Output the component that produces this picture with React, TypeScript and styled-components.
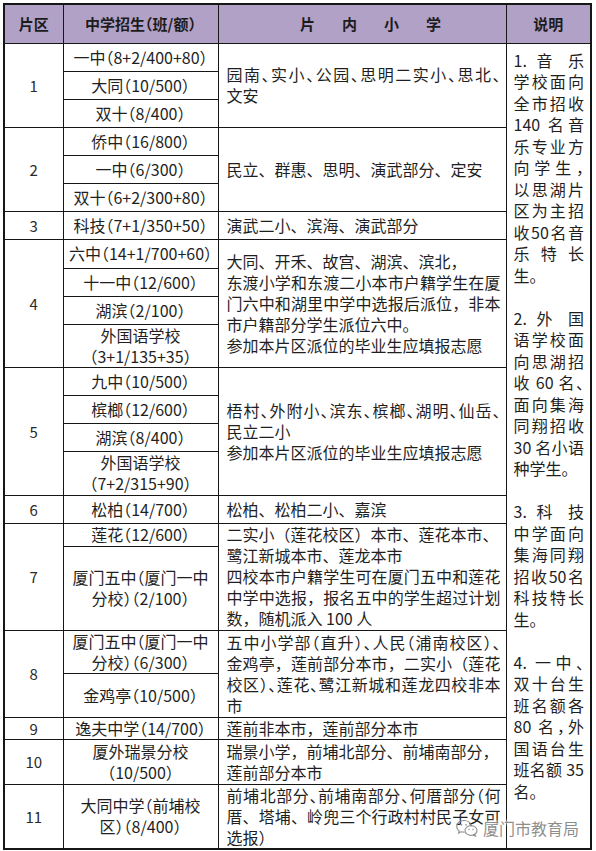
import React from "react";
import styled, { createGlobalStyle } from "styled-components";

const Global = createGlobalStyle`
  html, body {
    margin: 0;
    padding: 0;
    background: #ffffff;
  }
  body {
    font-family: "Noto Sans CJK SC", "Noto Sans", sans-serif;
    color: #1f1f1f;
  }
`;

const Page = styled.div`
  padding: 3px 0 0 3px;
`;

const Frame = styled.div`
  position: relative;
  width: 587px;
`;

const Table = styled.table`
  width: 587px;
  border-collapse: collapse;
  table-layout: fixed;
  border: 2px solid #161616;
`;

const Col = styled.col<{ $w: number }>`
  width: ${(p) => p.$w}px;
`;

const Row = styled.tr<{ $h: number }>`
  height: ${(p) => p.$h}px;
`;

const HeadCell = styled.th<{ $spread?: boolean }>`
  background: #b2a1c7;
  border: 1px solid #161616;
  font-size: 15px;
  font-weight: 700;
  color: #1c1c1c;
  text-align: center;
  vertical-align: middle;
  padding: 0;
  padding-left: ${(p) => (p.$spread ? "44px" : "0")};
  letter-spacing: ${(p) => (p.$spread ? "27px" : "0")};
  white-space: nowrap;
  font-feature-settings: "halt";
`;

const Cell = styled.td`
  border: 1px solid #161616;
  vertical-align: middle;
  padding: 0;
  font-size: 16px;
  line-height: 21px;
  color: #1f1f1f;
`;

const ZoneCell = styled(Cell)`
  text-align: center;
  font-size: 15px;
  color: #2a2a2a;
`;

const SchoolCell = styled(Cell)`
  text-align: center;
  white-space: nowrap;
  font-feature-settings: "halt";
`;

const AreaCell = styled(Cell)`
  padding: 0 5px 0 8px;
`;

const AreaLine = styled.span<{ $full?: boolean; $squeeze?: boolean }>`
  display: block;
  text-align: ${(p) => (p.$full ? "justify" : "left")};
  text-align-last: ${(p) => (p.$full ? "justify" : "left")};
  font-feature-settings: ${(p) => (p.$squeeze ? '"halt"' : "normal")};
`;

const NoteCell = styled(Cell)`
  vertical-align: top;
  padding: 6px 6px 0 7px;
  line-height: 21.5px;
`;

const NotePara = styled.div`
  margin-bottom: 21.5px;
  &:last-child {
    margin-bottom: 0;
  }
`;

const NoteLine = styled.span<{ $last?: boolean }>`
  display: block;
  font-feature-settings: "halt";
  text-align: ${(p) => (p.$last ? "left" : "justify")};
  text-align-last: ${(p) => (p.$last ? "left" : "justify")};
`;

const Watermark = styled.div`
  position: absolute;
  right: 11px;
  bottom: 12px;
  display: flex;
  align-items: center;
  gap: 4px;
  color: rgba(120, 120, 120, 0.85);
  font-size: 16px;
  line-height: 20px;
  text-shadow: 0 0 2px #fff, 0 0 3px #fff, 0 0 4px #fff;
  pointer-events: none;
`;

type Line = { t: string; full?: boolean; squeeze?: boolean };
type Zone = {
  zone: string;
  schools: { lines: string[]; h: number }[];
  area: Line[];
};

const zones: Zone[] = [
  {
    zone: "1",
    schools: [
      { lines: ["一中（8+2/400+80）"], h: 28 },
      { lines: ["大同（10/500）"], h: 28 },
      { lines: ["双十（8/400）"], h: 28 },
    ],
    area: [
      { t: "园南、实小、公园、思明二实小、思北、", full: true, squeeze: true },
      { t: "文安" },
    ],
  },
  {
    zone: "2",
    schools: [
      { lines: ["侨中（16/800）"], h: 28 },
      { lines: ["一中（6/300）"], h: 28 },
      { lines: ["双十（6+2/300+80）"], h: 28 },
    ],
    area: [{ t: "民立、群惠、思明、演武部分、定安" }],
  },
  {
    zone: "3",
    schools: [{ lines: ["科技（7+1/350+50）"], h: 28 }],
    area: [{ t: "演武二小、滨海、演武部分" }],
  },
  {
    zone: "4",
    schools: [
      { lines: ["六中（14+1/700+60）"], h: 29 },
      { lines: ["十一中（12/600）"], h: 28 },
      { lines: ["湖滨（2/100）"], h: 28 },
      { lines: ["外国语学校", "（3+1/135+35）"], h: 43 },
    ],
    area: [
      { t: "大同、开禾、故宫、湖滨、滨北，" },
      { t: "东渡小学和东渡二小本市户籍学生在厦", full: true },
      { t: "门六中和湖里中学中选报后派位，非本", full: true },
      { t: "市户籍部分学生派位六中。" },
      { t: "参加本片区派位的毕业生应填报志愿" },
    ],
  },
  {
    zone: "5",
    schools: [
      { lines: ["九中（10/500）"], h: 28 },
      { lines: ["槟榔（12/600）"], h: 28 },
      { lines: ["湖滨（8/400）"], h: 28 },
      { lines: ["外国语学校", "（7+2/315+90）"], h: 44 },
    ],
    area: [
      { t: "梧村、外附小、滨东、槟榔、湖明、仙岳、", full: true, squeeze: true },
      { t: "民立二小" },
      { t: "参加本片区派位的毕业生应填报志愿" },
    ],
  },
  {
    zone: "6",
    schools: [{ lines: ["松柏（14/700）"], h: 28 }],
    area: [{ t: "松柏、松柏二小、嘉滨" }],
  },
  {
    zone: "7",
    schools: [
      { lines: ["莲花（12/600）"], h: 23 },
      { lines: ["厦门五中（厦门一中", "分校）（2/100）"], h: 84 },
    ],
    area: [
      { t: "二实小（莲花校区）本市、莲花本市、" },
      { t: "鹭江新城本市、莲龙本市" },
      { t: "四校本市户籍学生可在厦门五中和莲花", full: true },
      { t: "中学中选报，报名五中的学生超过计划", full: true },
      { t: "数，随机派入 100 人" },
    ],
  },
  {
    zone: "8",
    schools: [
      { lines: ["厦门五中（厦门一中", "分校）（6/300）"], h: 43 },
      { lines: ["金鸡亭（10/500）"], h: 44 },
    ],
    area: [
      { t: "五中小学部（直升）、人民（浦南校区）、", full: true, squeeze: true },
      { t: "金鸡亭，莲前部分本市，二实小（莲花", full: true },
      { t: "校区）、莲花、鹭江新城和莲龙四校非本", full: true, squeeze: true },
      { t: "市" },
    ],
  },
  {
    zone: "9",
    schools: [{ lines: ["逸夫中学（14/700）"], h: 20 }],
    area: [{ t: "莲前非本市，莲前部分本市" }],
  },
  {
    zone: "10",
    schools: [{ lines: ["厦外瑞景分校", "（10/500）"], h: 45 }],
    area: [
      { t: "瑞景小学，前埔北部分、前埔南部分，" },
      { t: "莲前部分本市" },
    ],
  },
  {
    zone: "11",
    schools: [{ lines: ["大同中学（前埔校", "区）（8/400）"], h: 63 }],
    area: [
      { t: "前埔北部分、前埔南部分、何厝部分（何", full: true, squeeze: true },
      { t: "厝、塔埔、岭兜三个行政村村民子女可", full: true },
      { t: "选报）" },
    ],
  },
];

const notes: string[][] = [
  [
    "1. 音 乐",
    "学校面向",
    "全市招收",
    "140 名音",
    "乐专业方",
    "向学生，",
    "以思湖片",
    "区为主招",
    "收50名音",
    "乐 特 长",
    "生。",
  ],
  [
    "2. 外 国",
    "语学校面",
    "向思湖招",
    "收 60 名、",
    "面向集海",
    "同翔招收",
    "30 名小语",
    "种学生。",
  ],
  ["3. 科 技", "中学面向", "集海同翔", "招收50名", "科技特长", "生。"],
  [
    "4. 一中、",
    "双十台生",
    "班名额各",
    "80 名，外",
    "国语台生",
    "班名额 35",
    "名。",
  ],
];

const totalRows = zones.reduce((n, z) => n + z.schools.length, 0);

function WeChatMark() {
  const c = "rgba(130,130,130,0.85)";
  return (
    <svg width="24" height="20" viewBox="0 0 24 20" fill="none">
      <path
        d="M9 2.5c-4.1 0-7.3 2.6-7.3 5.9 0 1.8 1 3.4 2.5 4.5l-.6 2.2 2.5-1.3c.9.3 1.9.4 2.9.4"
        stroke={c}
        strokeWidth="1.2"
        strokeLinecap="round"
      />
      <path d="M16.2 7.8c-.6-3-3.6-5.3-7.2-5.3" stroke={c} strokeWidth="1.2" strokeLinecap="round" />
      <ellipse cx="16" cy="12.5" rx="6" ry="4.8" stroke={c} strokeWidth="1.2" />
      <path
        d="M19.6 16.3l1.2 2-2.6-1.2"
        stroke={c}
        strokeWidth="1.2"
        strokeLinecap="round"
        strokeLinejoin="round"
      />
      <circle cx="6.5" cy="6.8" r="0.9" fill={c} />
      <circle cx="11" cy="6.8" r="0.9" fill={c} />
      <circle cx="14" cy="11.5" r="0.8" fill={c} />
      <circle cx="18" cy="11.5" r="0.8" fill={c} />
    </svg>
  );
}

export default function App() {
  let first = true;
  return (
    <>
      <Global />
      <Page>
        <Frame>
          <Table>
            <colgroup>
              <Col $w={59} />
              <Col $w={155} />
              <Col $w={288} />
              <Col $w={85} />
            </colgroup>
            <thead>
              <Row $h={39}>
                <HeadCell>片区</HeadCell>
                <HeadCell>中学招生（班/额）</HeadCell>
                <HeadCell $spread>片内小学</HeadCell>
                <HeadCell>说明</HeadCell>
              </Row>
            </thead>
            <tbody>
              {zones.map((z) =>
                z.schools.map((s, i) => {
                  const showNote = first;
                  first = false;
                  return (
                    <Row key={`${z.zone}-${i}`} $h={s.h}>
                      {i === 0 && (
                        <ZoneCell rowSpan={z.schools.length}>{z.zone}</ZoneCell>
                      )}
                      <SchoolCell>
                        {s.lines.map((l, k) => (
                          <React.Fragment key={k}>
                            {k > 0 && <br />}
                            {l}
                          </React.Fragment>
                        ))}
                      </SchoolCell>
                      {i === 0 && (
                        <AreaCell rowSpan={z.schools.length}>
                          {z.area.map((a, k) => (
                            <AreaLine key={k} $full={a.full} $squeeze={a.squeeze}>
                              {a.t}
                            </AreaLine>
                          ))}
                        </AreaCell>
                      )}
                      {showNote && (
                        <NoteCell rowSpan={totalRows}>
                          {notes.map((p, k) => (
                            <NotePara key={k}>
                              {p.map((l, j) => (
                                <NoteLine key={j} $last={j === p.length - 1}>
                                  {l}
                                </NoteLine>
                              ))}
                            </NotePara>
                          ))}
                        </NoteCell>
                      )}
                    </Row>
                  );
                })
              )}
            </tbody>
          </Table>
          <Watermark>
            <WeChatMark />
            <span>厦门市教育局</span>
          </Watermark>
        </Frame>
      </Page>
    </>
  );
}
